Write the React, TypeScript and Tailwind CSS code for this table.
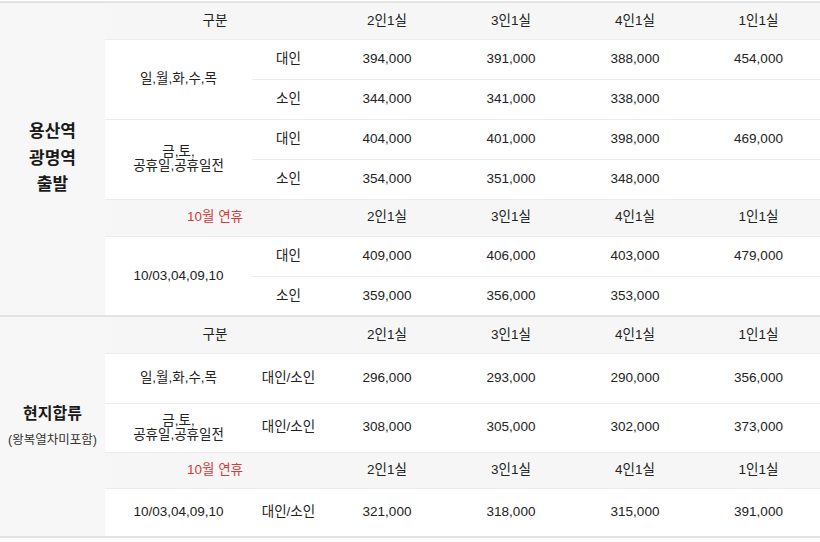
import React from 'react';

type PriceRow = {
  label: string;
  prices: string[];
};

type Group = {
  day: string[];
  rows: PriceRow[];
};

const ROOMS = ['2인1실', '3인1실', '4인1실', '1인1실'];

const stationGroups: Group[] = [
  {
    day: ['일,월,화,수,목'],
    rows: [
      { label: '대인', prices: ['394,000', '391,000', '388,000', '454,000'] },
      { label: '소인', prices: ['344,000', '341,000', '338,000', ''] },
    ],
  },
  {
    day: ['금,토,', '공휴일,공휴일전'],
    rows: [
      { label: '대인', prices: ['404,000', '401,000', '398,000', '469,000'] },
      { label: '소인', prices: ['354,000', '351,000', '348,000', ''] },
    ],
  },
];

const stationHoliday: Group = {
  day: ['10/03,04,09,10'],
  rows: [
    { label: '대인', prices: ['409,000', '406,000', '403,000', '479,000'] },
    { label: '소인', prices: ['359,000', '356,000', '353,000', ''] },
  ],
};

const localGroups: Group[] = [
  { day: ['일,월,화,수,목'], rows: [{ label: '대인/소인', prices: ['296,000', '293,000', '290,000', '356,000'] }] },
  { day: ['금,토,', '공휴일,공휴일전'], rows: [{ label: '대인/소인', prices: ['308,000', '305,000', '302,000', '373,000'] }] },
];

const localHoliday: Group = {
  day: ['10/03,04,09,10'],
  rows: [{ label: '대인/소인', prices: ['321,000', '318,000', '315,000', '391,000'] }],
};

const cell = 'text-center align-middle font-normal p-0';
const line = 'border-b border-[#ececec]';

const HeadRow = ({ title, red, h }: { title: string; red?: boolean; h: string }) => (
  <tr className={h}>
    <th colSpan={2} className={`${cell} ${line} bg-[#f6f6f6] ${red ? 'text-[#d23b3b]' : ''}`}>
      {title}
    </th>
    {ROOMS.map((r) => (
      <th key={r} className={`${cell} ${line} bg-[#f6f6f6]`}>
        {r}
      </th>
    ))}
  </tr>
);

const GroupRows = ({ group, h, lastLine = line }: { group: Group; h: string; lastLine?: string }) => (
  <>
    {group.rows.map((row, i) => {
      const rowLine = i === group.rows.length - 1 ? lastLine : line;
      return (
        <tr key={row.label + i} className={h}>
          {i === 0 && (
            <td rowSpan={group.rows.length} className={`${cell} ${lastLine} leading-[14px]`}>
              {group.day.map((d) => (
                <div key={d}>{d}</div>
              ))}
            </td>
          )}
          <td className={`${cell} ${rowLine}`}>{row.label}</td>
          {row.prices.map((p, j) => (
            <td key={j} className={`${cell} ${rowLine}`}>
              {p}
            </td>
          ))}
        </tr>
      );
    })}
  </>
);

const App: React.FC = () => {
  return (
    <div className="w-[820px] h-[542px] bg-white pt-px text-[13.5px] text-[#222] font-['Liberation_Sans','Noto_Sans_CJK_KR',sans-serif]">
      <table className="w-full table-fixed border-collapse border-t-2 border-b-2 border-[#e3e3e3]">
        <colgroup>
          <col className="w-[105px]" />
          <col className="w-[147px]" />
          <col className="w-[73px]" />
          <col className="w-[124px]" />
          <col className="w-[124px]" />
          <col className="w-[124px]" />
          <col />
        </colgroup>
        <tbody>
          {/* 용산역 / 광명역 출발 */}
          <tr className="h-[37px]">
            <th
              rowSpan={8}
              className="bg-[#f7f7f7] p-0 align-middle text-center text-[17px] font-bold leading-[26.5px] text-[#1a1a1a] border-b-2 border-[#e3e3e3]"
            >
              <div>용산역</div>
              <div>광명역</div>
              <div>출발</div>
            </th>
            <th colSpan={2} className={`${cell} ${line} bg-[#f6f6f6]`}>
              구분
            </th>
            {ROOMS.map((r) => (
              <th key={r} className={`${cell} ${line} bg-[#f6f6f6]`}>
                {r}
              </th>
            ))}
          </tr>
          {stationGroups.map((g, i) => (
            <GroupRows key={i} group={g} h="h-[40px]" />
          ))}
          <HeadRow title="10월  연휴" red h="h-[37px]" />
          <GroupRows group={stationHoliday} h="h-[40px]" lastLine="border-b-2 border-[#e3e3e3]" />

          {/* 현지합류 */}
          <tr className="h-[37px]">
            <th rowSpan={5} className="bg-[#f7f7f7] p-0 align-middle text-center font-normal text-[#1a1a1a]">
              <div className="text-[16px] font-bold leading-[26px]">현지합류</div>
              <div className="text-[12.5px] leading-[26px] text-[#333]">(왕복열차미포함)</div>
            </th>
            <th colSpan={2} className={`${cell} ${line} bg-[#f6f6f6]`}>
              구분
            </th>
            {ROOMS.map((r) => (
              <th key={r} className={`${cell} ${line} bg-[#f6f6f6]`}>
                {r}
              </th>
            ))}
          </tr>
          <GroupRows group={localGroups[0]} h="h-[50px]" />
          <GroupRows group={localGroups[1]} h="h-[49px]" />
          <HeadRow title="10월  연휴" red h="h-[36px]" />
          <GroupRows group={localHoliday} h="h-[49px]" lastLine="" />
        </tbody>
      </table>
    </div>
  );
};

export default App;
